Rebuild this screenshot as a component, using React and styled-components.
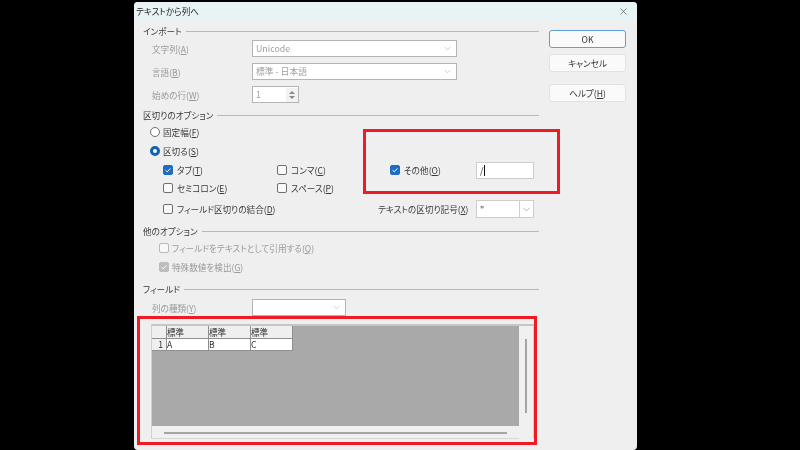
import React from 'react';
import styled, { createGlobalStyle } from 'styled-components';
import { ChevronDown, X } from 'lucide-react';

const GlobalStyle = createGlobalStyle`
  html, body { margin: 0; padding: 0; background: #000; }
  * { box-sizing: border-box; }
`;

const Screen = styled.div`
  position: relative;
  width: 800px;
  height: 450px;
  overflow: hidden;
  background: #000;
  padding: 2px 0 0 134px;
  font-family: "Noto Sans CJK JP", "Noto Sans", sans-serif;
  font-feature-settings: "palt";
  font-size: 8.6px;
  color: #3a3a3a;
`;

const Dialog = styled.div`
  width: 503px;
  height: 448px;
  background: #efefef;
  border-radius: 4px;
  overflow: hidden;
  filter: blur(0.4px);
`;

const TitleBar = styled.div`
  display: flex;
  align-items: center;
  justify-content: space-between;
  height: 20px;
  padding: 0 8px 2px 2px;
  background: #e8f3f6;
  color: #222;
`;

const Body = styled.div`
  display: flex;
  gap: 10px;
  padding-left: 9px;
`;

const Form = styled.div`
  display: flex;
  flex-direction: column;
  width: 396px;
`;

const Side = styled.div`
  display: flex;
  flex-direction: column;
  width: 77px;
  padding-top: 8px;
`;

const Button = styled.div`
  display: flex;
  align-items: center;
  justify-content: center;
  height: 18px;
  margin-top: ${(p) => p.$top || 0}px;
  padding-bottom: 1px;
  background: #fafafa;
  border: ${(p) => (p.$primary ? '1.5px solid #5f9fd8' : '1px solid #e2e2e2')};
  border-radius: 3px;
  color: #333;
`;

const SectionTitle = styled.div`
  display: flex;
  align-items: center;
  gap: 4px;
  height: 14px;
  margin-top: ${(p) => p.$top}px;
  white-space: nowrap;
  &::after {
    content: '';
    flex: 1;
    height: 1px;
    background: #b8b8b8;
  }
`;

const FieldRow = styled.div`
  display: grid;
  grid-template-columns: 100px auto;
  justify-content: start;
  align-items: center;
  height: 17px;
  margin-top: ${(p) => p.$top}px;
  padding-left: 9px;
  color: #999;
`;

const Select = styled.div`
  display: flex;
  align-items: center;
  justify-content: space-between;
  width: ${(p) => p.$width}px;
  height: 17px;
  padding: 0 3px;
  background: #fff;
  border: 1.5px solid #b4b4b4;
  color: #a0a0a0;
  font-size: 8.8px;
`;

const SpinButtons = styled.div`
  display: flex;
  flex-direction: column;
  justify-content: center;
  gap: 2px;
  height: 14px;
  margin-right: -3px;
  padding: 0 3px;
  background: #f2f2f2;
`;

const OptionRow = styled.div`
  display: flex;
  align-items: center;
  gap: 3px;
  height: 16px;
  margin-top: ${(p) => p.$top}px;
  padding-left: ${(p) => p.$indent}px;
  color: ${(p) => (p.$disabled ? '#999' : '#3a3a3a')};
`;

const CheckGrid = styled.div`
  display: grid;
  grid-template-columns: 114px 113px 86px 58px;
  align-items: center;
  height: 16px;
  margin-top: ${(p) => p.$top}px;
  padding-left: 20px;
`;

const Option = styled.div`
  display: flex;
  align-items: center;
  gap: 4px;
  padding-bottom: 1px;
  white-space: nowrap;
`;

const Radio = styled.span`
  flex: none;
  width: 10px;
  height: 10px;
  border-radius: 50%;
  background: #fff;
  border: ${(p) => (p.$on ? '3px solid #0f62b5' : '1px solid #6f6f6f')};
`;

const Box = styled.span`
  display: flex;
  align-items: center;
  justify-content: center;
  flex: none;
  width: 10px;
  height: 10px;
  border-radius: 2px;
  background: ${(p) => (p.$on ? '#1f6cc0' : p.$greyed ? '#bdbdbd' : '#f8f8f8')};
  border: 1px solid ${(p) => (p.$on ? '#1f6cc0' : p.$greyed ? '#bdbdbd' : p.$faint ? '#b9b9b9' : '#6f6f6f')};
`;

const Check = () => (
  <svg width="8" height="8" viewBox="0 0 8 8" fill="none">
    <path d="M1.6 4.2 3.3 5.8 6.4 2.4" stroke="#fff" strokeWidth="1" />
  </svg>
);

const TextInput = styled.div`
  display: flex;
  align-items: center;
  width: 58px;
  height: 17px;
  padding-left: 3px;
  background: #fff;
  border: 1px solid #cdcdcd;
  color: #333;
  font-size: 9px;
`;

const Caret = styled.span`
  width: 1px;
  height: 11px;
  background: #111;
`;

const DropButton = styled.span`
  display: flex;
  align-items: center;
  justify-content: center;
  width: 14px;
  height: 16px;
  margin-right: -3px;
  background: #fff;
  border-left: 1px solid #cfcfcf;
`;

const QuoteSelect = styled(Select)`
  width: 58px;
  height: 18px;
  border: 1px solid #cdcdcd;
  color: #333;
`;

const QuoteLabel = styled.span`
  display: block;
  margin-left: -12px;
  white-space: nowrap;
`;

const Preview = styled.div`
  display: grid;
  grid-template-columns: 367px 14px;
  grid-template-rows: 100px 13px;
  width: 382px;
  height: 115px;
  margin: 8px 0 0 9px;
  background: #f0f0f0;
  border-top: 2px solid #c6c6c6;
  border-right: 1px solid #d0d0d0;
  border-bottom: 1px solid #d8d8d8;
  box-shadow: -1px 0 0 #d0d0d0;
`;

const GreyArea = styled.div`
  background: #a9a9a9;
`;

const Table = styled.div`
  display: grid;
  grid-template-columns: 15px repeat(3, 42px);
  grid-template-rows: 13px 12px;
  width: max-content;
  font-size: 8.6px;
  line-height: 1;
`;

const Cell = styled.div`
  display: flex;
  align-items: center;
  justify-content: ${(p) => (p.$center ? 'flex-end' : 'flex-start')};
  padding: ${(p) => (p.$center ? '0 3px 0 0' : '0')};
  background: ${(p) => (p.$head ? '#efefef' : '#fff')};
  border-right: 1px solid #8f8f8f;
  border-bottom: 1px solid #8f8f8f;
  color: #333;
`;

const VTrack = styled.div`
  display: flex;
  justify-content: center;
  padding: 13px 0;
`;

const VThumb = styled.div`
  width: 2px;
  background: #a5a5a5;
`;

const HTrack = styled.div`
  display: flex;
  align-items: center;
  padding: 0 12px;
`;

const HThumb = styled.div`
  flex: 1;
  height: 2px;
  background: #a5a5a5;
`;

const Corner = styled.div`
  width: 100%;
  height: 100%;
  background: #f0f0f0;
`;

const Highlight = styled.div`
  position: absolute;
  left: ${(p) => p.$x}px;
  top: ${(p) => p.$y}px;
  width: ${(p) => p.$w}px;
  height: ${(p) => p.$h}px;
  border: 3px solid #ed1c24;
`;

const Chevron = ({ color = '#a8a8a8' }) => <ChevronDown size={11} strokeWidth={1.2} color={color} />;

const heads = ['標準', '標準', '標準'];
const row = ['A', 'B', 'C'];

export default function App() {
  return (
    <Screen>
      <GlobalStyle />
      <Dialog>
        <TitleBar>
          <span>テキストから列へ</span>
          <X size={11} strokeWidth={1.2} color="#333" />
        </TitleBar>
        <Body>
          <Form>
            <SectionTitle $top={2}>インポート</SectionTitle>
            <FieldRow $top={2}>
              <span>文字列(<u>A</u>)</span>
              <Select $width={205}>Unicode<Chevron /></Select>
            </FieldRow>
            <FieldRow $top={6}>
              <span>言語(<u>B</u>)</span>
              <Select $width={205}>標準 - 日本語<Chevron /></Select>
            </FieldRow>
            <FieldRow $top={6}>
              <span>始めの行(<u>W</u>)</span>
              <Select $width={47}>
                1
                <SpinButtons>
                  <svg width="6" height="3" viewBox="0 0 6 3"><path d="M3 0 6 3H0Z" fill="#888" /></svg>
                  <svg width="6" height="3" viewBox="0 0 6 3"><path d="M0 0H6L3 3Z" fill="#888" /></svg>
                </SpinButtons>
              </Select>
            </FieldRow>

            <SectionTitle $top={5}>区切りのオプション</SectionTitle>
            <OptionRow $top={2} $indent={7}><Radio /><span>固定幅(<u>F</u>)</span></OptionRow>
            <OptionRow $top={3} $indent={7}><Radio $on /><span>区切る(<u>S</u>)</span></OptionRow>
            <CheckGrid $top={3}>
              <Option><Box $on><Check /></Box><span>タブ(<u>T</u>)</span></Option>
              <Option><Box /><span>コンマ(<u>C</u>)</span></Option>
              <Option><Box $on><Check /></Box><span>その他(<u>O</u>)</span></Option>
              <TextInput>/<Caret /></TextInput>
            </CheckGrid>
            <CheckGrid $top={2}>
              <Option><Box /><span>セミコロン(<u>E</u>)</span></Option>
              <Option><Box /><span>スペース(<u>P</u>)</span></Option>
            </CheckGrid>
            <CheckGrid $top={4}>
              <Option><Box /><span>フィールド区切りの結合(<u>D</u>)</span></Option>
              <span />
              <QuoteLabel>テキストの区切り記号(<u>X</u>)</QuoteLabel>
              <QuoteSelect>"<DropButton><Chevron color="#777" /></DropButton></QuoteSelect>
            </CheckGrid>

            <SectionTitle $top={8}>他のオプション</SectionTitle>
            <OptionRow $top={2} $indent={16} $disabled><Box $faint /><span>フィールドをテキストとして引用する(<u>Q</u>)</span></OptionRow>
            <OptionRow $top={3} $indent={16} $disabled><Box $greyed><Check /></Box><span>特殊数値を検出(<u>G</u>)</span></OptionRow>

            <SectionTitle $top={7}>フィールド</SectionTitle>
            <FieldRow $top={3}>
              <span>列の種類(<u>Y</u>)</span>
              <Select $width={94}><span /><Chevron /></Select>
            </FieldRow>

            <Preview>
              <GreyArea>
                <Table>
                  <Cell $head />
                  {heads.map((h, i) => <Cell $head key={i}>{h}</Cell>)}
                  <Cell $head $center>1</Cell>
                  {row.map((c) => <Cell key={c}>{c}</Cell>)}
                </Table>
              </GreyArea>
              <VTrack><VThumb /></VTrack>
              <HTrack><HThumb /></HTrack>
              <Corner />
            </Preview>
          </Form>
          <Side>
            <Button $primary>OK</Button>
            <Button $top={6}>キャンセル</Button>
            <Button $top={12}>ヘルプ(<u>H</u>)</Button>
          </Side>
        </Body>
      </Dialog>
      <Highlight $x={363} $y={129} $w={197} $h={65} />
      <Highlight $x={137} $y={316} $w={400} $h={129} />
    </Screen>
  );
}
